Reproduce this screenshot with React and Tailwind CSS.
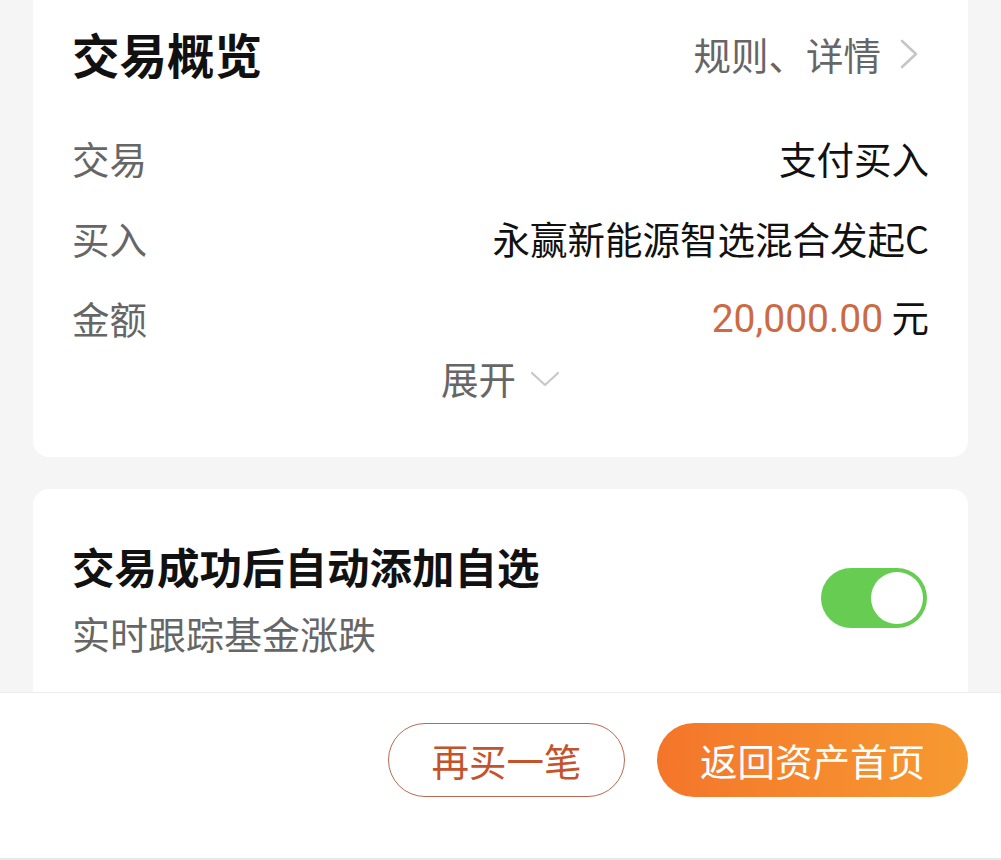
const font = { fontFamily: '"Noto Sans CJK SC", "Noto Sans", sans-serif' };

function Row({ label, children }) {
  return (
    <div className="flex h-[80px] items-center justify-between">
      <span className="text-[37.5px] text-[#666]">{label}</span>
      <span className="text-[37.5px] text-[#111]">{children}</span>
    </div>
  );
}

export default function App() {
  return (
    <div
      className="flex h-[860px] w-[1001px] flex-col overflow-hidden bg-[#f5f5f5]"
      style={font}
    >
      <div className="flex-1 overflow-hidden px-[33px]">
        <div className="rounded-b-[16px] bg-white px-[39px] pb-[59px] pt-[26px]">
          <div className="flex h-[56px] items-center justify-between">
            <h1 className="text-[47.5px] font-bold leading-none text-[#111]">交易概览</h1>
            <div className="flex items-center text-[37.5px] text-[#666]">
              规则、详情
              <svg className="ml-[18px] mr-[10px]" width="20" height="32" viewBox="0 0 20 32" fill="none">
                <polyline points="3,3 17,16 3,29" stroke="#c6c6c6" strokeWidth="2.6" strokeLinecap="round" strokeLinejoin="round" />
              </svg>
            </div>
          </div>
          <div className="mt-[36px]">
            <Row label="交易">支付买入</Row>
            <Row label="买入">永赢新能源智选混合发起C</Row>
            <Row label="金额">
              <span
                className="text-[39px] text-[#cc6a43]"
                style={{ fontFamily: 'Roboto, "Noto Sans CJK SC", sans-serif' }}
              >
                20,000.00
              </span>{' '}
              元
            </Row>
            <div className="flex h-[40px] items-center justify-center text-[37.5px] text-[#666]">
              展开
              <svg className="ml-[14px] mt-[2px]" width="30" height="18" viewBox="0 0 30 18" fill="none">
                <polyline points="2,3 15,15 28,3" stroke="#c8c8c8" strokeWidth="2.2" strokeLinecap="round" strokeLinejoin="round" />
              </svg>
            </div>
          </div>
        </div>

        <div className="mt-[32px] rounded-t-[16px] bg-white px-[39px] pb-[60px] pt-[52px]">
          <div className="flex items-center justify-between">
            <div>
              <div className="text-[42.5px] font-bold leading-[50px] text-[#111]">交易成功后自动添加自选</div>
              <div className="mt-[20px] text-[38px] leading-[44px] text-[#666]">实时跟踪基金涨跌</div>
            </div>
            <div className="mr-[2px] flex h-[60px] w-[106px] items-center justify-end rounded-full bg-[#66cc52] p-[4px]">
              <div className="h-[52px] w-[52px] rounded-full bg-white" />
            </div>
          </div>
        </div>
      </div>

      <div className="flex h-[166px] justify-end gap-[32px] border-t border-[#ececec] bg-white pr-[33px] pt-[30px]">
        <button className="flex h-[74px] w-[237px] items-center justify-center rounded-full border-[1.5px] border-[#b9694f] text-[37.5px] text-[#c4532c]">
          再买一笔
        </button>
        <button className="flex h-[74px] w-[311px] items-center justify-center rounded-full bg-gradient-to-r from-[#f4752a] to-[#f69a31] text-[37.5px] text-white">
          返回资产首页
        </button>
      </div>
      <div className="h-[2px] bg-[#e8e8e8]" />
    </div>
  );
}
